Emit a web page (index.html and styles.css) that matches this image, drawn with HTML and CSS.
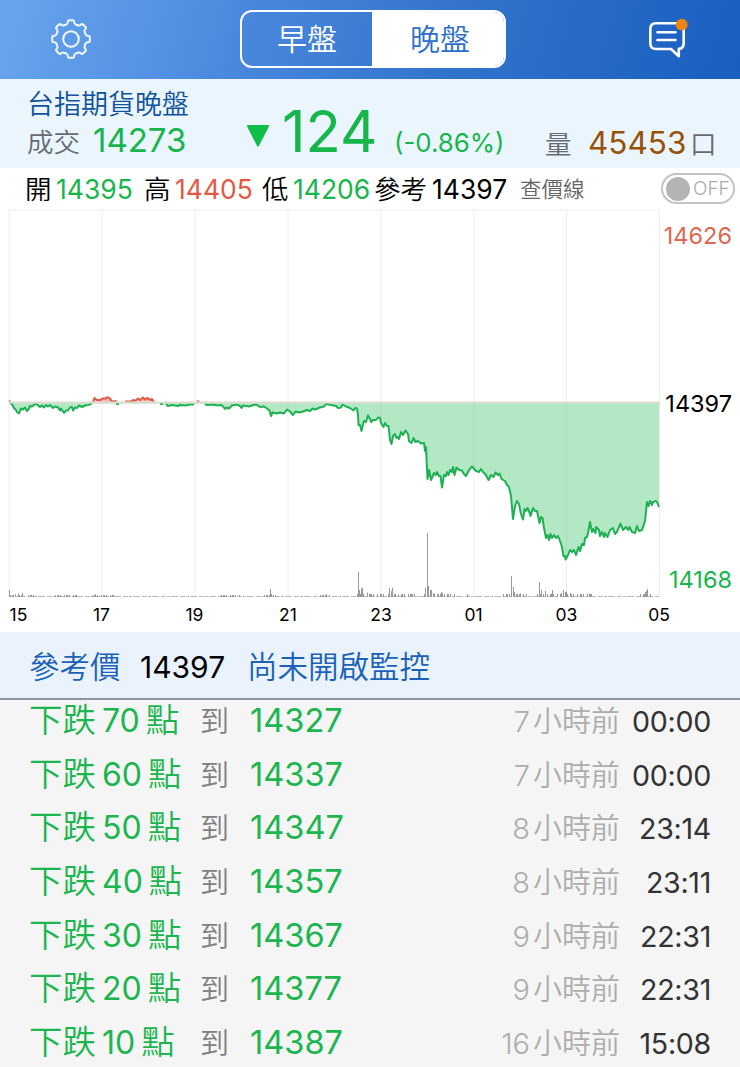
FILE: index.html
```
<!DOCTYPE html>
<html lang="zh-Hant">
<head>
    <meta charset="UTF-8">
    <meta name="viewport" content="width=device-width, initial-scale=1.0">
    <title>台指期貨晚盤</title>
    <link rel="stylesheet" href="styles.css">
</head>
<body>
    <header class="topbar">
        <svg class="gear" viewBox="-21 -21 42 42">
            <defs>
                <path id="tooth" d="M-5.8 -14 L-4.8 -14.6 Q-3.5 -15 -3.3 -16.4 L-3 -18 Q-2.8 -18.8 -1.8 -18.8 H1.8 Q2.8 -18.8 3 -18 L3.3 -16.4 Q3.5 -15 4.8 -14.6 L5.8 -14"/>
            </defs>
            <use href="#tooth"/>
            <use href="#tooth" transform="rotate(45)"/>
            <use href="#tooth" transform="rotate(90)"/>
            <use href="#tooth" transform="rotate(135)"/>
            <use href="#tooth" transform="rotate(180)"/>
            <use href="#tooth" transform="rotate(225)"/>
            <use href="#tooth" transform="rotate(270)"/>
            <use href="#tooth" transform="rotate(315)"/>
            <circle r="7.8"/>
        </svg>
        <div class="tabs">
            <div class="tab">早盤</div>
            <div class="tab active">晚盤</div>
        </div>
        <svg class="message" viewBox="0 0 42 42">
            <path d="M9 4.3 H31 Q36.7 4.3 36.7 10 V24 Q36.7 29.7 31.8 29.9 V37.3 L24 30 H9 Q3.3 30 3.3 24.3 V10 Q3.3 4.3 9 4.3 Z"/>
            <path d="M10.5 13.2 H28.5 M10.5 21 H28.5"/>
            <circle cx="34.7" cy="5.7" r="5.9"/>
        </svg>
    </header>

    <section class="quote">
        <div class="name">台指期貨晚盤</div>
        <div class="deal">
            <span class="label">成交</span>
            <span class="price">14273</span>
            <svg class="down" viewBox="0 0 24 24"><path d="M2 2 H22 L12 21.5 Z"/></svg>
            <span class="change">124</span>
            <span class="percent">(-0.86%)</span>
            <div class="total">
                <span class="label">量</span>
                <span class="volume">45453</span>
                <span class="unit">口</span>
            </div>
        </div>
    </section>

    <section class="ohlc">
        <span>開</span><span class="num green">14395</span>
        <span>高</span><span class="num red">14405</span>
        <span>低</span><span class="num green">14206</span>
        <span>參考</span><span class="num">14397</span>
        <span class="check">查價線</span>
        <div class="toggle"><i class="knob"></i>OFF</div>
    </section>

    <svg class="chart" viewBox="0 208 740 424">
        <!-- grid -->
        <path class="grid" d="M9 210 H659 M9 210 V597 M102 210 V597 M195 210 V597 M288 210 V597 M381 210 V597 M474 210 V597 M566.500 210 V597 M659.500 210 V597"/>
        <!-- price under reference -->
        <path class="fall" d="M10 403 L12 404 14 408 16 410 17 412 19 413.500 21 408.500 23 409.500 25 407.500 27 411 28.500 409.500 30 406 32 406.500 35 404 37 404.500 40 407 42 405.500 44 407.500 46 405 48 406.500 50 405 53 408 55 406.500 58 407.500 60 410.500 61 408.500 64 413 66 410.500 68 410.500 70 407.500 72 407 73 410.500 75 407.500 77 408 79 405.500 82 407 85 405.500 88 405 92 403.500 L160 403.500 162 404.500 166 404 168 406 172 405 178 406 180 405 186 405.500 190 404.500 200 403.500 207 405 213 404.500 218 405.500 221 405 223 406.500 225 409 226.500 407.500 229 408.500 232 405.500 237 404.500 240 406 241.500 408 243 405.500 249 406.500 255 404.500 257 405 260 407 264 406.500 267 408.500 269.500 410.500 271 416 272.500 412.500 277 413.500 280 412.500 284 413.500 287 409.500 290 411.500 293 415 295.500 411.500 299 412.500 303 411.500 307 410 310 411 312.500 408.500 315 409.500 320 407.500 324 406.500 326 404 331 405 336 406 338 408 341 407.500 342.500 404.500 346 406.500 350 408 353.500 410.500 355 408 357 408.500 358 415 358.500 425 360 425 361.500 431 363 424 364 421 366 422 368 415.500 370 419 371 422 373 420 376 420 378 417.500 380 418 381 423 383.500 427 385 423 387 426 388.500 426 390 440 391.500 444 393 436 395 434 396.500 438 398 437 399 439 401 432 403 435 405.500 430.500 408 434 409 441 411.500 443 413.500 438 415.500 442 418 441 421 443.500 424 443 425 451 426 447 427.500 479 429 470 431 480 434 473 436 475 437 472 439 476 440.500 476 442 487.500 444 475 446 476 447 472 448.500 475 450 470 452 472 453 467 454.500 475 456.500 467.500 459 470 462 470.500 464 474 466 476 469 470 472 466.500 476 471 479 472 481 469 483 472 486 475 488.500 480 491 475 493.500 477 495.500 472.500 498 475 499.500 473.500 501.500 479 505 481 507 485 509 487 511 496 513 519 515 506 517 501 519 504 521 514 523 519.500 524.500 509 526 511 527.500 508 529 511 530.500 516 533 508 535 511 537 511 539.500 523 541 517 542.500 518 544 528 546 538 547.500 535 549 540 550.500 534 552 538 554 535 556 538 558 536 560 541 562 547 563.500 556 565 556 565.500 559.500 568 555 570 550 572 552 574 550 576 555 578.500 547 580 551 582 544 584 545 585 538 587 537 588 533 590 522 592 532 593 529 595.500 533 596 527 599 530 600 536 602 532 604 537 605 533 607.500 537 610 530 613 528 615 534 617 532 619 527 620.500 523.500 623 530 626 527 628 530 629.500 527 632 532 635 533 637 526 639 531 642 530 645 521 647 502 648.500 506 650 501 652 505 653 502 656 501 657.500 503 659 507 V403 Z"/>
        <path class="line" d="M10 403 L12 404 14 408 16 410 17 412 19 413.500 21 408.500 23 409.500 25 407.500 27 411 28.500 409.500 30 406 32 406.500 35 404 37 404.500 40 407 42 405.500 44 407.500 46 405 48 406.500 50 405 53 408 55 406.500 58 407.500 60 410.500 61 408.500 64 413 66 410.500 68 410.500 70 407.500 72 407 73 410.500 75 407.500 77 408 79 405.500 82 407 85 405.500 88 405 92 403.500 M116 404 H119 M160 404 H163 M166 404 L168 406 172 405 178 406 180 405 186 405.500 190 404.500 194 404.500 M205 404 L207 405 213 404.500 218 405.500 221 405 223 406.500 225 409 226.500 407.500 229 408.500 232 405.500 237 404.500 240 406 241.500 408 243 405.500 249 406.500 255 404.500 257 405 260 407 264 406.500 267 408.500 269.500 410.500 271 416 272.500 412.500 277 413.500 280 412.500 284 413.500 287 409.500 290 411.500 293 415 295.500 411.500 299 412.500 303 411.500 307 410 310 411 312.500 408.500 315 409.500 320 407.500 324 406.500 326 404 331 405 336 406 338 408 341 407.500 342.500 404.500 346 406.500 350 408 353.500 410.500 355 408 357 408.500 358 415 358.500 425 360 425 361.500 431 363 424 364 421 366 422 368 415.500 370 419 371 422 373 420 376 420 378 417.500 380 418 381 423 383.500 427 385 423 387 426 388.500 426 390 440 391.500 444 393 436 395 434 396.500 438 398 437 399 439 401 432 403 435 405.500 430.500 408 434 409 441 411.500 443 413.500 438 415.500 442 418 441 421 443.500 424 443 425 451 426 447 427.500 479 429 470 431 480 434 473 436 475 437 472 439 476 440.500 476 442 487.500 444 475 446 476 447 472 448.500 475 450 470 452 472 453 467 454.500 475 456.500 467.500 459 470 462 470.500 464 474 466 476 469 470 472 466.500 476 471 479 472 481 469 483 472 486 475 488.500 480 491 475 493.500 477 495.500 472.500 498 475 499.500 473.500 501.500 479 505 481 507 485 509 487 511 496 513 519 515 506 517 501 519 504 521 514 523 519.500 524.500 509 526 511 527.500 508 529 511 530.500 516 533 508 535 511 537 511 539.500 523 541 517 542.500 518 544 528 546 538 547.500 535 549 540 550.500 534 552 538 554 535 556 538 558 536 560 541 562 547 563.500 556 565 556 565.500 559.500 568 555 570 550 572 552 574 550 576 555 578.500 547 580 551 582 544 584 545 585 538 587 537 588 533 590 522 592 532 593 529 595.500 533 596 527 599 530 600 536 602 532 604 537 605 533 607.500 537 610 530 613 528 615 534 617 532 619 527 620.500 523.500 623 530 626 527 628 530 629.500 527 632 532 635 533 637 526 639 531 642 530 645 521 647 502 648.500 506 650 501 652 505 653 502 656 501 657.500 503 659 507"/>
        <!-- price over reference -->
        <path class="rise" d="M93 403 L94.500 398 97 400 100 400 103 398.500 106 398.500 107.500 397 110 398.500 111.500 401 117 401.500 118 403 Z M125 403 L126 401 131 401.500 133 400 135 401 138 398.500 140 400 143 397.500 145 399.500 147 398 151 400 152 399 154 402.500 Z"/>
        <path class="line over" d="M9 401 L10.500 401.500 M93 402 L94.500 398 97 400 100 400 103 398.500 106 398.500 107.500 397 110 398.500 111.500 401 117 401.500 M125 401.500 L131 401.500 133 400 135 401 138 398.500 140 400 143 397.500 145 399.500 147 398 151 400 152 399 154 402 M196.500 401.500 H199.500"/>
        <path class="ref" d="M9 402.500 H660"/>
        <!-- volume -->
        <path class="base" d="M9 596.500 H659"/>
        <path class="noise" d="M10 596 H24 M28 596 H36 M55 596 H78 M92 596 H114 M221 596 H240 M264 596 H276 M320 596 H330"/>
        <path class="noise dense" d="M357 595.500 H385 M388 595.500 H418 M424 595.500 H456 M503 595.500 H527 M537 595.500 H592 M640 595.500 H652"/>
        <path class="bars" d="M9.500 597 V590 M15.500 597 V594 M18.500 597 V593.500 M22.500 597 V593 M95.500 597 V594 M270.500 597 V589 M271.500 597 V594 M326.500 597 V594 M358.500 597 V572 M359.500 597 V590 M361.500 597 V588.500 M362.500 597 V588 M367.500 597 V592.500 M369.500 597 V594 M389.500 597 V588 M391.500 597 V591 M392.500 597 V587.500 M395.500 597 V594 M410.500 597 V594 M425.500 597 V588 M427.500 597 V533 M428.500 597 V586 M430.500 597 V590 M431.500 597 V590 M433.500 597 V593 M441.500 597 V592 M442.500 597 V593 M450.500 597 V593.500 M467.500 597 V594 M511.500 597 V576 M513.500 597 V587 M514.500 597 V592 M520.500 597 V593.500 M539.500 597 V582 M541.500 597 V590 M545.500 597 V591 M552.500 597 V590 M561.500 597 V593 M563.500 597 V590 M565.500 597 V592 M566.500 597 V591.500 M570.500 597 V593 M589.500 597 V593.500 M645.500 597 V592 M646.500 597 V591 M647.500 597 V589"/>
        <g class="hours">
            <text x="18.500" y="621">15</text>
            <text x="101.500" y="621">17</text>
            <text x="194.500" y="621">19</text>
            <text x="288" y="621">21</text>
            <text x="381" y="621">23</text>
            <text x="473.500" y="621">01</text>
            <text x="566.500" y="621">03</text>
            <text x="659" y="621">05</text>
        </g>
        <g class="levels">
            <text class="red" x="732" y="244">14626</text>
            <text x="732" y="411.500">14397</text>
            <text class="green" x="732" y="587.500">14168</text>
        </g>
    </svg>

    <section class="monitor">
        <span>參考價</span>
        <span class="base-price">14397</span>
        <span>尚未開啟監控</span>
    </section>

    <ul class="alerts">
        <li><span class="drop">下跌<b>70</b>點</span><span class="to">到</span><span class="target">14327</span><span class="ago"><b>7</b>小時前</span><span class="time">00:00</span></li>
        <li><span class="drop">下跌<b>60</b>點</span><span class="to">到</span><span class="target">14337</span><span class="ago"><b>7</b>小時前</span><span class="time">00:00</span></li>
        <li><span class="drop">下跌<b>50</b>點</span><span class="to">到</span><span class="target">14347</span><span class="ago"><b>8</b>小時前</span><span class="time">23:14</span></li>
        <li><span class="drop">下跌<b>40</b>點</span><span class="to">到</span><span class="target">14357</span><span class="ago"><b>8</b>小時前</span><span class="time">23:11</span></li>
        <li><span class="drop">下跌<b>30</b>點</span><span class="to">到</span><span class="target">14367</span><span class="ago"><b>9</b>小時前</span><span class="time">22:31</span></li>
        <li><span class="drop">下跌<b>20</b>點</span><span class="to">到</span><span class="target">14377</span><span class="ago"><b>9</b>小時前</span><span class="time">22:31</span></li>
        <li><span class="drop">下跌<b>10</b>點</span><span class="to">到</span><span class="target">14387</span><span class="ago"><b>16</b>小時前</span><span class="time">15:08</span></li>
    </ul>
</body>
</html>
```
FILE: styles.css
```
* {
    box-sizing: border-box;
}
body {
    margin: 0;
    width: 740px;
    height: 1067px;
    overflow: hidden;
    background: #f5f5f5;
    color: #000;
    font-family: Inter, "Noto Sans CJK TC", sans-serif;
    font-weight: 350;
    white-space: nowrap;
}
svg {
    display: block;
}
.green {
    color: #17b64c;
    fill: #17b64c;
}
.red {
    color: #e25a45;
    fill: #e0674f;
}

/* top bar */
.topbar {
    display: flex;
    align-items: center;
    height: 79px;
    padding: 0 0 1px 50px;
    background: linear-gradient(105deg, #68a5ed 0%, #4886dc 35%, #2f70ca 66%, #195fc0 100%);
}
.gear {
    width: 42px;
    height: 42px;
    fill: none;
    stroke: #f2f8ff;
    stroke-width: 2;
    stroke-linecap: round;
}
.tabs {
    display: flex;
    width: 266px;
    height: 58px;
    margin-left: 148px;
    border: 2px solid #fff;
    border-radius: 12px;
    overflow: hidden;
}
.tab {
    width: 130px;
    text-align: center;
    font-size: 30px;
    line-height: 54px;
    color: #fff;
}
.tab.active {
    width: 132px;
    padding-left: 4px;
    background: #fff;
    color: #2c6fc9;
}
.message {
    width: 42px;
    height: 42px;
    margin: 2px 0 0 141px;
    overflow: visible;
    fill: none;
    stroke: #fff;
    stroke-width: 2.6;
    stroke-linejoin: round;
    stroke-linecap: round;
}
.message circle {
    fill: #ea8510;
    stroke: none;
}

/* last deal */
.quote {
    height: 89px;
    padding-left: 27px;
    background: #eaf5fe;
}
.name {
    height: 38px;
    font-size: 27px;
    line-height: 52px;
    color: #10529c;
}
.deal {
    display: grid;
    grid-template-columns: 66px 153px 36px 112px 151px auto;
    align-items: baseline;
    height: 51px;
    line-height: 29px;
}
.label,
.unit {
    font-size: 26.5px;
    color: #666b73;
}
.price {
    font-size: 33px;
    font-weight: 400;
    color: #17b64c;
}
.down {
    align-self: start;
    width: 24px;
    height: 24px;
    margin-top: 7px;
    fill: #0fbd49;
    stroke: #0fbd49;
    stroke-width: 2;
    stroke-linejoin: round;
}
.change {
    font-size: 58px;
    font-weight: 400;
    color: #17b64c;
}
.percent {
    font-size: 25.8px;
    font-weight: 380;
    color: #17b64c;
}
.total {
    display: grid;
    grid-template-columns: 43px 102px 30px;
    align-items: baseline;
    align-self: start;
    margin-top: 11px;
}
.volume {
    font-size: 31.5px;
    font-weight: 400;
    color: #985208;
}

/* open / high / low */
.ohlc {
    display: grid;
    grid-template-columns: 31px 88px 31px 87px 31px 81px 58px 88px 141px 74px;
    align-items: baseline;
    height: 40px;
    padding-left: 25px;
    background: #fff;
    font-size: 26.5px;
    line-height: 42px;
}
.num {
    font-weight: 400;
}
.check {
    align-self: start;
    font-size: 21.5px;
    color: #666;
}
.toggle {
    display: flex;
    align-items: center;
    align-self: start;
    gap: 3px;
    height: 31px;
    margin-top: 5px;
    padding-left: 3px;
    border: 2px solid #c4c4c4;
    border-radius: 16px;
    font-size: 19px;
    font-weight: 300;
    color: #aaa;
}
.knob {
    flex: none;
    width: 24px;
    height: 24px;
    border-radius: 50%;
    background: #b4b4b4;
}

/* chart */
.chart {
    width: 740px;
    height: 424px;
    background: #fff;
}
.grid {
    fill: none;
    stroke: #eee;
}
.fall {
    fill: #12b94b;
    fill-opacity: .32;
}
.rise {
    fill: #f6b7ae;
}
.line {
    fill: none;
    stroke: #1db153;
    stroke-width: 2;
    stroke-linejoin: round;
}
.over {
    stroke: #df5b4c;
}
.ref {
    stroke: #dcdcd0;
    stroke-width: 2;
}
.base {
    stroke: #bbb;
    stroke-dasharray: 5 1 3 1 7 2;
}
.noise {
    stroke: #999;
    stroke-width: 2;
    stroke-dasharray: 1 1 2 1 1 3;
}
.dense {
    stroke-width: 3;
    stroke-dasharray: 1 2 2 1 1 3;
}
.bars {
    stroke: #999;
}
.hours {
    font-size: 17.5px;
    font-weight: 400;
    text-anchor: middle;
}
.levels {
    font-size: 23.5px;
    font-weight: 380;
    text-anchor: end;
}

/* monitor bar */
.monitor {
    display: grid;
    grid-template-columns: 111px 107px auto;
    align-items: baseline;
    height: 68px;
    padding-left: 29px;
    border-bottom: 2px solid #9194a0;
    background: #eaf2fe;
    font-size: 30.5px;
    line-height: 69px;
    color: #1b61b8;
}
.base-price {
    font-size: 30px;
    font-weight: 380;
    color: #000;
}

/* alerts */
.alerts {
    margin: 0;
    padding: 0;
    list-style: none;
}
.alerts li {
    display: grid;
    grid-template-columns: 171px 50px 199px 171px 91px;
    align-items: baseline;
    height: 53.65px;
    padding-left: 29px;
    line-height: 41px;
}
.drop {
    font-size: 33.5px;
    color: #1cb550;
}
.drop b {
    margin: 0 6px;
    font-size: 32px;
    font-weight: 400;
}
.to {
    font-size: 29px;
    color: #808080;
}
.target {
    font-size: 32.6px;
    font-weight: 400;
    color: #1cb550;
}
.ago {
    font-size: 29px;
    text-align: right;
    color: #adadad;
}
.ago b {
    margin-right: 3px;
    font-weight: 350;
}
.time {
    font-size: 28.6px;
    font-weight: 380;
    letter-spacing: -.3px;
    text-align: right;
    color: #333;
}
```
